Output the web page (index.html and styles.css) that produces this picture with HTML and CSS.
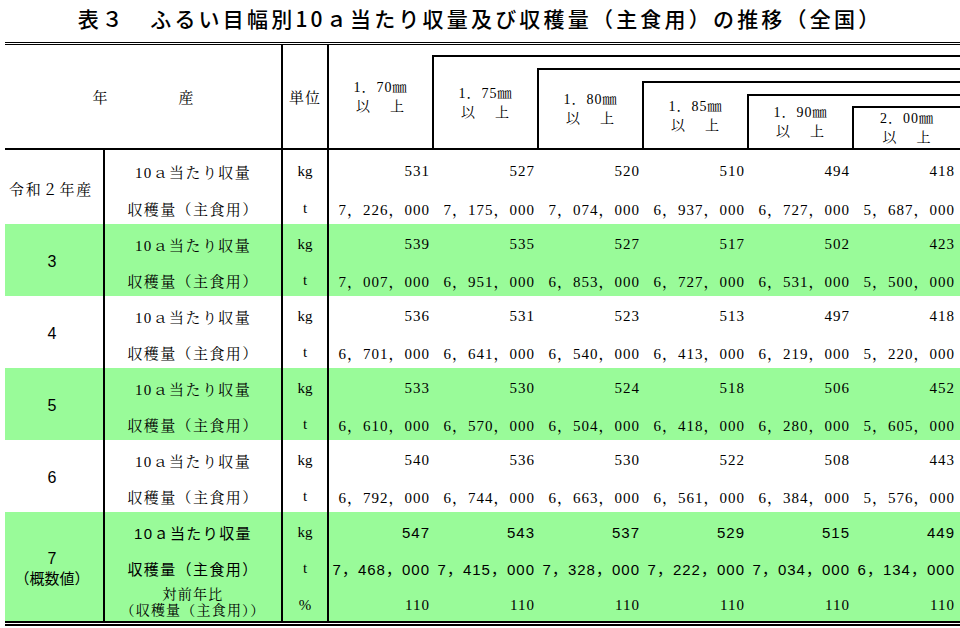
FILE: index.html
```html
<!DOCTYPE html>
<html lang="ja">
<head>
<meta charset="utf-8">
<title>表３</title>
<link rel="stylesheet" href="styles.css">
</head>
<body>
<div class="title">表３　ふるい目幅別10ａ当たり収量及び収穫量（主食用）の推移（全国）</div>
<div class="tbl">
  <div class="head">
    <div class="h-nen">年　　　　産</div>
    <div class="h-unit">単位</div>
    <div class="h-col"><span>1．70㎜</span><span class="ij">以　上</span></div>
    <div class="nest n2">
      <div class="h-col"><span>1．75㎜</span><span class="ij">以　上</span></div>
      <div class="nest">
        <div class="h-col"><span>1．80㎜</span><span class="ij">以　上</span></div>
        <div class="nest">
          <div class="h-col"><span>1．85㎜</span><span class="ij">以　上</span></div>
          <div class="nest">
            <div class="h-col"><span>1．90㎜</span><span class="ij">以　上</span></div>
            <div class="nest n6">
              <div class="h-col h-last"><span>2．00㎜</span><span class="ij">以　上</span></div>
            </div>
          </div>
        </div>
      </div>
    </div>
  </div>

  <div class="body">
    <div class="blk r2a">
      <div class="yr yr-j">令和２年産</div>
      <div class="lb">10ａ当たり収量</div><div class="u">kg</div>
      <div class="n">531</div><div class="n">527</div><div class="n">520</div><div class="n">510</div><div class="n">494</div><div class="n">418</div>
      <div class="lb">収穫量（主食用）</div><div class="u">t</div>
      <div class="n">7，226，000</div><div class="n">7，175，000</div><div class="n">7，074，000</div><div class="n">6，937，000</div><div class="n">6，727，000</div><div class="n">5，687，000</div>
    </div>
    <div class="blk r2 g">
      <div class="yr">3</div>
      <div class="lb">10ａ当たり収量</div><div class="u">kg</div>
      <div class="n">539</div><div class="n">535</div><div class="n">527</div><div class="n">517</div><div class="n">502</div><div class="n">423</div>
      <div class="lb">収穫量（主食用）</div><div class="u">t</div>
      <div class="n">7，007，000</div><div class="n">6，951，000</div><div class="n">6，853，000</div><div class="n">6，727，000</div><div class="n">6，531，000</div><div class="n">5，500，000</div>
    </div>
    <div class="blk r2">
      <div class="yr">4</div>
      <div class="lb">10ａ当たり収量</div><div class="u">kg</div>
      <div class="n">536</div><div class="n">531</div><div class="n">523</div><div class="n">513</div><div class="n">497</div><div class="n">418</div>
      <div class="lb">収穫量（主食用）</div><div class="u">t</div>
      <div class="n">6，701，000</div><div class="n">6，641，000</div><div class="n">6，540，000</div><div class="n">6，413，000</div><div class="n">6，219，000</div><div class="n">5，220，000</div>
    </div>
    <div class="blk r2 g">
      <div class="yr">5</div>
      <div class="lb">10ａ当たり収量</div><div class="u">kg</div>
      <div class="n">533</div><div class="n">530</div><div class="n">524</div><div class="n">518</div><div class="n">506</div><div class="n">452</div>
      <div class="lb">収穫量（主食用）</div><div class="u">t</div>
      <div class="n">6，610，000</div><div class="n">6，570，000</div><div class="n">6，504，000</div><div class="n">6，418，000</div><div class="n">6，280，000</div><div class="n">5，605，000</div>
    </div>
    <div class="blk r2">
      <div class="yr">6</div>
      <div class="lb">10ａ当たり収量</div><div class="u">kg</div>
      <div class="n">540</div><div class="n">536</div><div class="n">530</div><div class="n">522</div><div class="n">508</div><div class="n">443</div>
      <div class="lb">収穫量（主食用）</div><div class="u">t</div>
      <div class="n">6，792，000</div><div class="n">6，744，000</div><div class="n">6，663，000</div><div class="n">6，561，000</div><div class="n">6，384，000</div><div class="n">5，576，000</div>
    </div>
    <div class="blk r3 g">
      <div class="yr"><span>7</span><span class="gai">（概数値）</span></div>
      <div class="lb gs">10ａ当たり収量</div><div class="u">kg</div>
      <div class="n gs">547</div><div class="n gs">543</div><div class="n gs">537</div><div class="n gs">529</div><div class="n gs">515</div><div class="n gs">449</div>
      <div class="lb gs">収穫量（主食用）</div><div class="u">t</div>
      <div class="n gs">7，468，000</div><div class="n gs">7，415，000</div><div class="n gs">7，328，000</div><div class="n gs">7，222，000</div><div class="n gs">7，034，000</div><div class="n gs">6，134，000</div>
      <div class="lb lb2"><span>対前年比</span><span>（収穫量（主食用））</span></div><div class="u">%</div>
      <div class="n">110</div><div class="n">110</div><div class="n">110</div><div class="n">110</div><div class="n">110</div><div class="n">110</div>
    </div>
  </div>
</div>
</body>
</html>
```

FILE: styles.css
```css
* {
  box-sizing: border-box;
}

body {
  margin: 0;
  background: #ffffff;
  color: #000000;
  font-family: "Liberation Serif", "Noto Serif CJK JP", "Noto Sans CJK JP", serif;
}

.title {
  height: 42px;
  line-height: 37px;
  text-align: center;
  white-space: nowrap;
  font-family: "Noto Sans CJK JP", sans-serif;
  font-weight: 500;
  font-size: 21px;
  letter-spacing: 3.2px;
}

.tbl {
  margin-left: 5px;
  width: 955px;
}

/* ---------- header ---------- */
.head {
  display: flex;
  height: 108px;
  border-top: 3px double #000;
  border-bottom: 2px solid #000;
}

.h-nen {
  width: 278px;
  flex-shrink: 0;
  border-right: 2px solid #000;
  display: flex;
  align-items: center;
  justify-content: center;
  font-size: 15px;
  letter-spacing: 2.2px;
  padding-left: 2px;
}

.h-unit {
  width: 46px;
  flex-shrink: 0;
  border-right: 2px solid #000;
  display: flex;
  align-items: center;
  justify-content: center;
  font-size: 15px;
  letter-spacing: 1px;
}

.h-col {
  width: 103px;
  flex-shrink: 0;
  display: flex;
  flex-direction: column;
  align-items: center;
  justify-content: center;
  font-size: 14px;
  line-height: 19px;
  letter-spacing: 1px;
  white-space: nowrap;
}

.h-last {
  flex: 1;
  width: auto;
}

.ij {
  letter-spacing: 3px;
  padding-left: 2px;
}

.nest {
  flex: 1;
  display: flex;
  margin-top: 11px;
  border-top: 2px solid #000;
  border-left: 2px solid #000;
}

.n2 {
  margin-top: 10px;
}

.n6 {
  margin-top: 10px;
}

/* ---------- body ---------- */
.body {
  border-bottom: 5px double #000;
}

.blk {
  display: grid;
  grid-template-columns: 100px 178px 46px 103px 105px 105px 105px 105px 108px;
}

.r2 {
  grid-template-rows: 36px 36px;
}

.r2a {
  grid-template-rows: 37px 37px;
}

.r3 {
  grid-template-rows: 36px 36px 37px;
}

.g {
  background: #99fb99;
}

.yr {
  grid-row: 1 / -1;
  grid-column: 1;
  border-right: 2px solid #000;
  display: flex;
  flex-direction: column;
  align-items: center;
  justify-content: center;
  padding-top: 3px;
  padding-right: 4px;
  font-family: "Liberation Sans", "Noto Sans CJK JP", sans-serif;
  font-size: 16px;
  line-height: 19px;
}

.yr-j {
  font-family: "Liberation Serif", "Noto Serif CJK JP", "Noto Sans CJK JP", serif;
  font-size: 15px;
  letter-spacing: 1.8px;
  padding-top: 6px;
  padding-right: 6px;
}

.gai {
  font-family: "Noto Sans CJK JP", sans-serif;
  font-size: 15px;
}

.lb {
  border-right: 2px solid #000;
  display: flex;
  align-items: center;
  justify-content: center;
  padding-top: 5px;
  padding-left: 0;
  font-size: 15px;
  letter-spacing: 1.4px;
  white-space: nowrap;
}

.lb2 {
  flex-direction: column;
  padding-top: 1px;
  line-height: 16px;
  font-size: 14px;
  letter-spacing: 1.2px;
}

.u {
  border-right: 2px solid #000;
  display: flex;
  align-items: center;
  justify-content: center;
  padding-top: 5px;
  font-size: 15px;
}

.n {
  display: flex;
  align-items: center;
  justify-content: flex-end;
  padding: 5px 2px 0 0;
  font-size: 15px;
  letter-spacing: 1px;
  white-space: nowrap;
}

.blk > .n:nth-child(8n+1) {
  padding-right: 5px;
}

.gs {
  font-family: "Liberation Sans", "Noto Sans CJK JP", sans-serif;
}
```
